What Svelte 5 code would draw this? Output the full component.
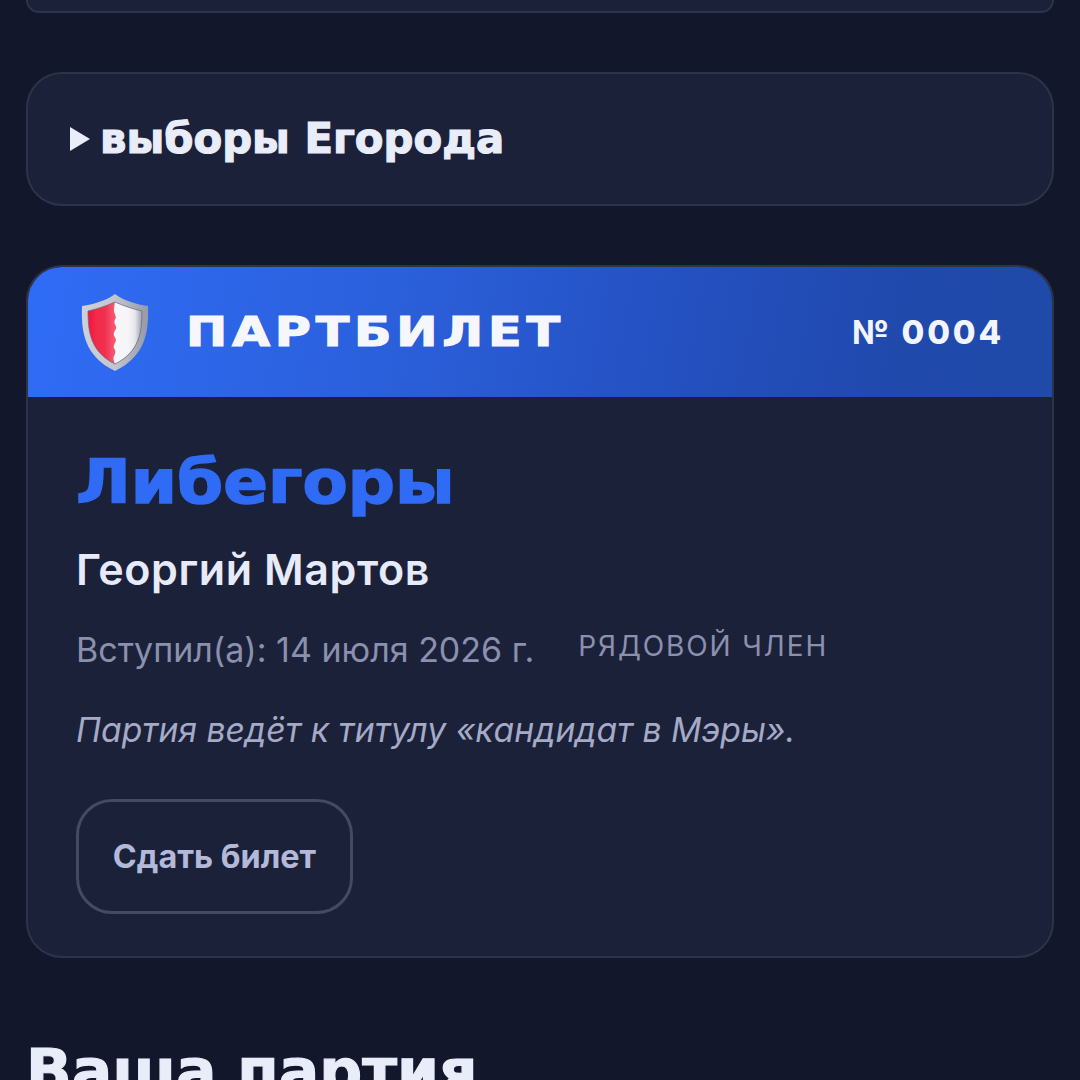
<script>
  const ticket = { party: 'Либегоры', name: 'Георгий Мартов', joined: 'Вступил(а): 14 июля 2026 г.', role: 'РЯДОВОЙ ЧЛЕН', number: '№ 0004' };
</script>

<main class="page">
  <div class="card stub"></div>

  <details class="card elections">
    <summary><span class="tri"></span><span class="wide">выборы Егорода</span></summary>
  </details>

  <section class="card ticket">
    <header class="band">
      <div class="brand">
        <svg class="shield" viewBox="0 0 70 80" width="70" height="80" aria-hidden="true">
          <defs>
            <linearGradient id="rim" x1="0" y1="0" x2="1" y2="0">
              <stop offset="0" stop-color="#cfd1d8"/><stop offset="0.5" stop-color="#c3c6cf"/><stop offset="1" stop-color="#9599a8"/>
            </linearGradient>
            <linearGradient id="red" x1="0" y1="0" x2="1" y2="0">
              <stop offset="0" stop-color="#f5123a"/><stop offset="0.3" stop-color="#f22a4c"/><stop offset="0.6" stop-color="#f0304f"/><stop offset="1" stop-color="#f96078"/>
            </linearGradient>
            <linearGradient id="white" x1="0" y1="0" x2="1" y2="0">
              <stop offset="0.5" stop-color="#f6f6f9"/><stop offset="0.75" stop-color="#e6e6ec"/><stop offset="1" stop-color="#9ea2ad"/>
            </linearGradient>
          </defs>
          <path d="M35 1 C43 7 55 11 68 13 C69 38 66 63 35 78 C4 63 1 38 2 13 C15 11 27 7 35 1Z" fill="url(#rim)"/>
          <path d="M35 9 C26 13 17 16 8 18 C8 40 11 59 35 71 C34 68 33 66 34 63 C36 60 36 58 34 55 C33 52 36 50 36 47 C36 44 33 43 34 40 C35 37 37 36 36 33 C34 30 34 28 36 25 C36 22 34 20 34 17 Z" fill="url(#red)"/>
          <path d="M35 9 C44 13 53 16 62 18 C62 40 59 59 35 71 C34 68 33 66 34 63 C36 60 36 58 34 55 C33 52 36 50 36 47 C36 44 33 43 34 40 C35 37 37 36 36 33 C34 30 34 28 36 25 C36 22 34 20 34 17 Z" fill="url(#white)"/>
          <path d="M35 9 C26 13 17 16 8 18 C8 40 11 59 35 71 C59 59 62 40 62 18 C53 16 44 13 35 9Z" fill="none" stroke="#6d6f7c" stroke-width="0.8"/>
        </svg>
        <span class="title wide">ПАРТБИЛЕТ</span>
      </div>
      <span class="num">{ticket.number}</span>
    </header>

    <div class="body">
      <h2 class="party wide">{ticket.party}</h2>
      <p class="name">{ticket.name}</p>
      <div class="meta">
        <span class="joined">{ticket.joined}</span>
        <span class="role">{ticket.role}</span>
      </div>
      <p class="hint">Партия ведёт к титулу «кандидат в Мэры».</p>
      <button class="btn">Сдать билет</button>
    </div>
  </section>

  <h2 class="section wide">Ваша партия</h2>
</main>

<style>
  :global(html), :global(body) { margin: 0; background: #13172b; }
  .page {
    height: 1080px;
    overflow: hidden;
    box-sizing: border-box;
    padding: 0 26px;
    background: #13172b;
    font-family: Inter, "Noto Sans", sans-serif;
    color: #e8ebf8;
  }
  .card {
    background: #1b2139;
    border: 2px solid #2e3348;
    border-radius: 36px;
    box-sizing: border-box;
  }
  .stub {
    height: 13px;
    border-top: 0;
    border-radius: 0 0 36px 36px;
  }
  .wide {
    font-family: "DejaVu Sans", sans-serif;
    font-weight: 700;
  }
  .elections {
    margin-top: 59px;
    height: 134px;
  }
  summary {
    list-style: none;
    display: flex;
    align-items: center;
    gap: 10px;
    height: 129px;
    padding-left: 42px;
    font-size: 41.8px;
    color: #e9ecf9;
    -webkit-text-stroke: 1.2px #e9ecf9;
  }
  .tri {
    width: 0; height: 0;
    border-left: 20px solid #e9ecf9;
    border-top: 12px solid transparent;
    border-bottom: 12px solid transparent;
  }
  .ticket {
    margin-top: 59px;
    height: 693px;
    overflow: hidden;
  }
  .band {
    height: 130px;
    display: flex;
    align-items: center;
    justify-content: space-between;
    padding: 0 48px 0 52px;
    background: linear-gradient(100deg, #2f6cf6 0%, #2b60dc 35%, #2552c4 60%, #2049ac 85%, #1f4aa8 100%);
  }
  .brand { display: flex; align-items: center; gap: 36px; }
  .shield { display: block; margin-top: 2px; }
  .title {
    display: inline-block;
    font-size: 41px;
    letter-spacing: 4px;
    line-height: 50px;
    color: #f6f7fd;
    -webkit-text-stroke: 1.2px #f6f7fd;
    transform: scaleX(1.2);
    transform-origin: left center;
  }
  .num {
    font-family: Inter, sans-serif;
    font-weight: 800;
    font-size: 33px;
    letter-spacing: 2.8px;
    color: #f2f5fd;
  }
  .body { padding: 0 48px; }
  .party {
    margin: 49px 0 0;
    font-size: 60px;
    line-height: 72px;
    color: #2f6bf5;
    -webkit-text-stroke: 1.5px #2f6bf5;
    transform: scaleX(1.1);
    transform-origin: left center;
  }
  .name {
    margin: 25px 0 0;
    font-size: 43px;
    line-height: 52px;
    font-weight: 600;
    letter-spacing: 0.6px;
    color: #e6eaf9;
  }
  .meta {
    margin-top: 33px;
    display: flex;
    align-items: flex-start;
    gap: 44px;
    color: #8b90ae;
  }
  .joined { font-size: 34px; line-height: 44px; }
  .role { font-size: 28px; line-height: 36px; letter-spacing: 1.9px; }
  .hint {
    margin: 36px 0 0;
    font-size: 33.7px;
    line-height: 44px;
    font-style: italic;
    color: #a5aac6;
  }
  .btn {
    display: block;
    margin-top: 47px;
    width: 277px;
    height: 115px;
    background: transparent;
    border: 3px solid #454a60;
    border-radius: 36px;
    font-family: Inter, sans-serif;
    font-weight: 700;
    font-size: 32.4px;
    color: #b3b9d8;
    padding: 0;
  }
  .section {
    margin: 77px 0 0;
    font-size: 60px;
    line-height: 72px;
    color: #e9ecf9;
    -webkit-text-stroke: 1.2px #e9ecf9;
  }
</style>
